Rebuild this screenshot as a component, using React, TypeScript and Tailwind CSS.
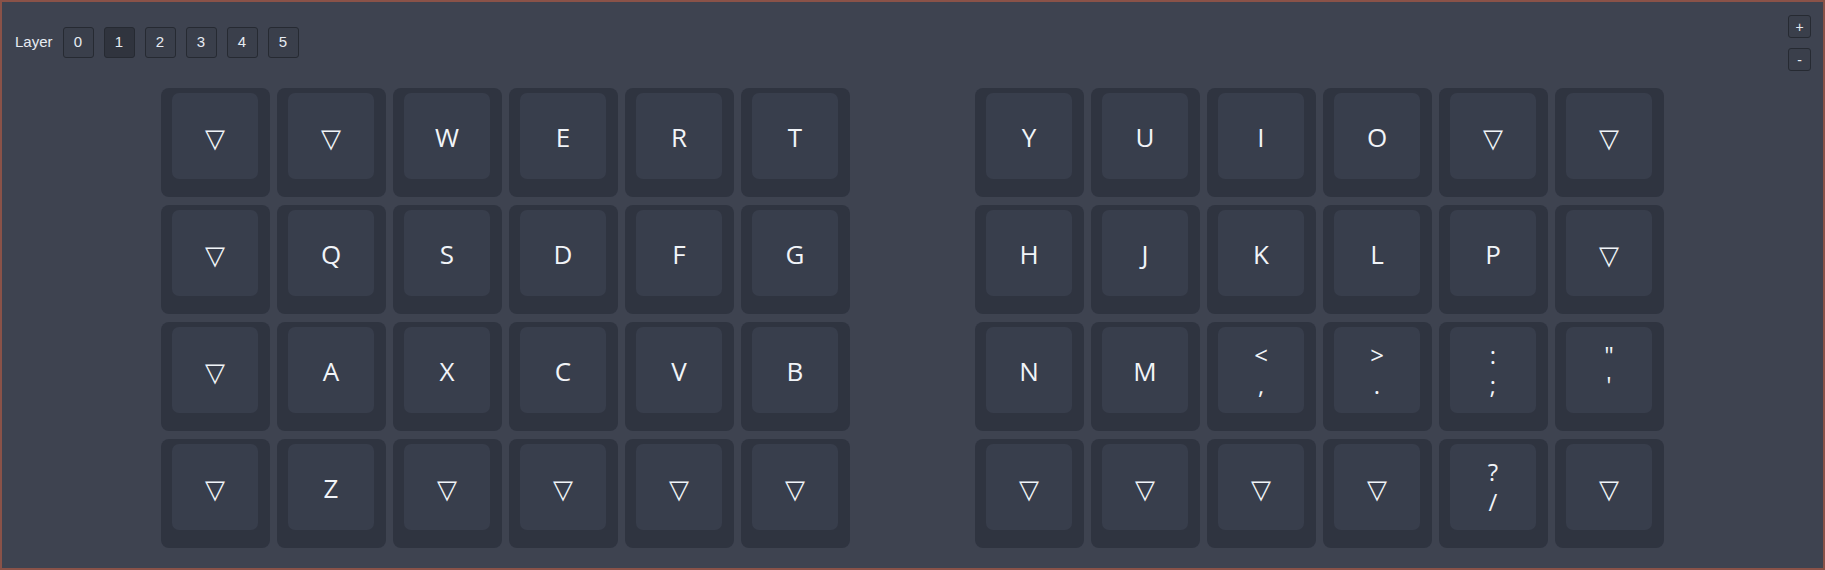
const leftRows: string[][] = [
  ['▽', '▽', 'W', 'E', 'R', 'T'],
  ['▽', 'Q', 'S', 'D', 'F', 'G'],
  ['▽', 'A', 'X', 'C', 'V', 'B'],
  ['▽', 'Z', '▽', '▽', '▽', '▽'],
];

const rightRows: string[][] = [
  ['Y', 'U', 'I', 'O', '▽', '▽'],
  ['H', 'J', 'K', 'L', 'P', '▽'],
  ['N', 'M', '<\n,', '>\n.', ':\n;', '"\n\''],
  ['▽', '▽', '▽', '▽', '?\n/', '▽'],
];

const layers = ['0', '1', '2', '3', '4', '5'];

function Key({ label }: { label: string }) {
  const lines = label.split('\n');
  return (
    <div className="w-[109px] h-[109px] rounded-[8px] bg-[#2f3440] pt-[5px] pl-[11px]">
      <div className="w-[86px] h-[86px] rounded-[7px] bg-[#383e4c] flex flex-col items-center justify-center text-[#f1f4f8] font-['Open_Sans','DejaVu_Sans',sans-serif]">
        {lines.length === 1 ? (
          <span className="text-[26px] leading-none mt-[1px]">{lines[0]}</span>
        ) : (
          lines.map((l, i) => (
            <span key={i} className="text-[24px] leading-[30px]">
              {l}
            </span>
          ))
        )}
      </div>
    </div>
  );
}

function Half({ rows }: { rows: string[][] }) {
  return (
    <div className="flex flex-col gap-[8px]">
      {rows.map((row, r) => (
        <div key={r} className="flex gap-[7px]">
          {row.map((k, c) => (
            <Key key={c} label={k} />
          ))}
        </div>
      ))}
    </div>
  );
}

export default function App() {
  return (
    <div className="relative w-[1825px] h-[570px] border-2 border-[#8a5248] bg-[#3e4350] font-['Liberation_Sans',Arial,sans-serif]">
      {/* Layer picker */}
      <div className="flex items-center pt-[25px] pl-[13px] h-[56px]">
        <span className="text-[15px] text-[#e6ebf2] mr-[10px]">Layer</span>
        <div className="flex gap-[10px]">
          {layers.map((l) => (
            <button
              key={l}
              className={
                l === '1'
                  ? 'w-[31px] h-[31px] rounded-[3px] border border-[#262a32] bg-[#30343e] text-[15px] text-[#e6ebf2]'
                  : 'w-[31px] h-[31px] rounded-[3px] border border-[#262a32] bg-[#3a3f4b] text-[15px] text-[#e6ebf2]'
              }
            >
              {l}
            </button>
          ))}
        </div>
      </div>

      {/* Zoom controls */}
      <div className="absolute top-[13px] right-[12px] flex flex-col gap-[10px]">
        <button className="w-[23px] h-[23px] rounded-[3px] border border-[#262a32] bg-[#3a3f4b] text-[14px] leading-none text-[#e6ebf2]">
          +
        </button>
        <button className="w-[23px] h-[23px] rounded-[3px] border border-[#262a32] bg-[#3a3f4b] text-[14px] leading-none text-[#e6ebf2]">
          -
        </button>
      </div>

      {/* Keyboard */}
      <div className="flex justify-center gap-[125px] mt-[30px]">
        <Half rows={leftRows} />
        <Half rows={rightRows} />
      </div>
    </div>
  );
}
